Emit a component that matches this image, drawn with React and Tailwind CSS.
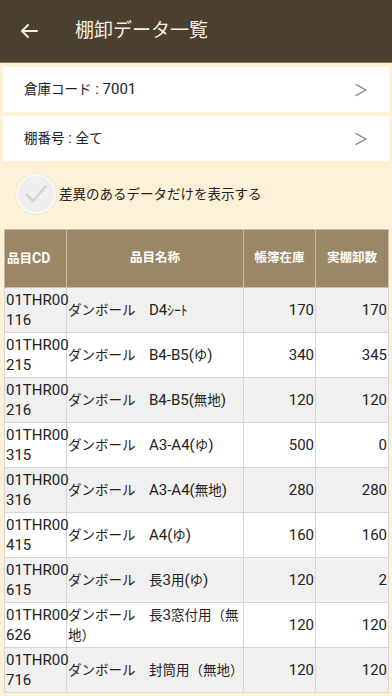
import React from "react";

const rows = [
  ["01THR00\n116", "ダンボール　D4ｼｰﾄ", "170", "170"],
  ["01THR00\n215", "ダンボール　B4-B5(ゆ)", "340", "345"],
  ["01THR00\n216", "ダンボール　B4-B5(無地)", "120", "120"],
  ["01THR00\n315", "ダンボール　A3-A4(ゆ)", "500", "0"],
  ["01THR00\n316", "ダンボール　A3-A4(無地)", "280", "280"],
  ["01THR00\n415", "ダンボール　A4(ゆ)", "160", "160"],
  ["01THR00\n615", "ダンボール　長3用(ゆ)", "120", "2"],
  ["01THR00\n626", "ダンボール　長3窓付用（無地）", "120", "120"],
  ["01THR00\n716", "ダンボール　封筒用（無地）", "120", "120"],
];

const font = { fontFamily: "Roboto, 'Noto Sans CJK JP', sans-serif" };

const CJK = /([\u3000-\u30ff\u3400-\u9fff\uff00-\uffef]+)/;

function J({ t, cls = "text-[13.5px]" }) {
  const parts = t.split(CJK);
  return (
    <>
      {parts.map((p, i) =>
        p === "" ? null : CJK.test(p) ? (
          <span key={i} className={cls}>{p}</span>
        ) : (
          <React.Fragment key={i}>{p}</React.Fragment>
        )
      )}
    </>
  );
}

function Chevron() {
  return (
    <svg width="12" height="14" viewBox="0 0 12 14" fill="none" stroke="#7a7a7a" strokeWidth="1.2" strokeLinecap="round" strokeLinejoin="round">
      <path d="M1 1.5L11 7L1 12.5" />
    </svg>
  );
}

export default function App() {
  return (
    <div className="w-[392px] h-[696px] overflow-hidden bg-[#fdf2d8]" style={font}>
      <div className="h-[63px] bg-[#4b4030] flex items-center border-b border-[#8c7c5e]">
        <div className="w-[56px] flex justify-center pl-[2px]">
          <svg width="18" height="16" viewBox="0 0 18 16" fill="none" stroke="#f4efe6" strokeWidth="2" strokeLinecap="round" strokeLinejoin="round">
            <path d="M17 8H2M8 2L2 8l6 6" />
          </svg>
        </div>
        <div className="text-[19px] text-[#f4efe6] pl-[19px]">棚卸データ一覧</div>
      </div>
      <div className="px-[3px] pt-[4px] flex flex-col gap-[4px]">
        <div className="h-[45px] bg-white flex items-center justify-between pl-[21px] pr-[22px]">
          <span className="text-[15px] text-[#222]"><J t="倉庫コード : 7001" /></span>
          <Chevron />
        </div>
        <div className="h-[45px] bg-white flex items-center justify-between pl-[21px] pr-[22px]">
          <span className="text-[15px] text-[#222]"><J t="棚番号 : 全て" /></span>
          <Chevron />
        </div>
      </div>
      <div className="h-[68px] flex items-center pl-[16px] pb-[2px]">
        <div className="w-[40px] h-[40px] rounded-full bg-[#efefef] border-2 border-[#f9f9f9] flex items-center justify-center shadow-[0_0_2px_rgba(0,0,0,0.12)]">
          <svg width="24" height="20" viewBox="0 0 24 20" fill="none" stroke="#d2d2d2" strokeWidth="2.6" strokeLinecap="round" strokeLinejoin="round">
            <path d="M2.5 10.5l6.5 6.5L21.5 2.5" />
          </svg>
        </div>
        <span className="text-[13.5px] text-[#222] ml-[3px]">差異のあるデータだけを表示する</span>
      </div>
      <div className="px-[4px]">
        <table className="border-collapse table-fixed w-[384px]">
          <colgroup>
            <col className="w-[62px]" />
            <col className="w-[177px]" />
            <col className="w-[72px]" />
            <col className="w-[73px]" />
          </colgroup>
          <thead>
            <tr className="h-[58px] bg-[#9b8766] text-white text-[14px] font-bold">
              <th className="border border-[#c9bda8] text-left pl-[2px] font-bold"><J t="品目CD" cls="text-[12.5px]" /></th>
              <th className="border border-[#c9bda8] text-center font-bold text-[12.5px]">品目名称</th>
              <th className="border border-[#c9bda8] text-center font-bold text-[12.5px]">帳簿在庫</th>
              <th className="border border-[#c9bda8] text-center font-bold text-[12.5px]">実棚卸数</th>
            </tr>
          </thead>
          <tbody>
            {rows.map((r, i) => (
              <tr key={i} className={`h-[45px] text-[15px] text-[#222] leading-[20px] ${i % 2 === 0 ? "bg-[#f0f0f0]" : "bg-white"}`}>
                <td className="border border-[#d6d6d6] pl-[1px] whitespace-pre-line align-middle">{r[0]}</td>
                <td className="border border-[#d6d6d6] pl-[1px] align-middle"><J t={r[1]} /></td>
                <td className="border border-[#d6d6d6] text-right pr-[1px] align-middle">{r[2]}</td>
                <td className="border border-[#d6d6d6] text-right pr-[1px] align-middle">{r[3]}</td>
              </tr>
            ))}
          </tbody>
        </table>
      </div>
    </div>
  );
}
